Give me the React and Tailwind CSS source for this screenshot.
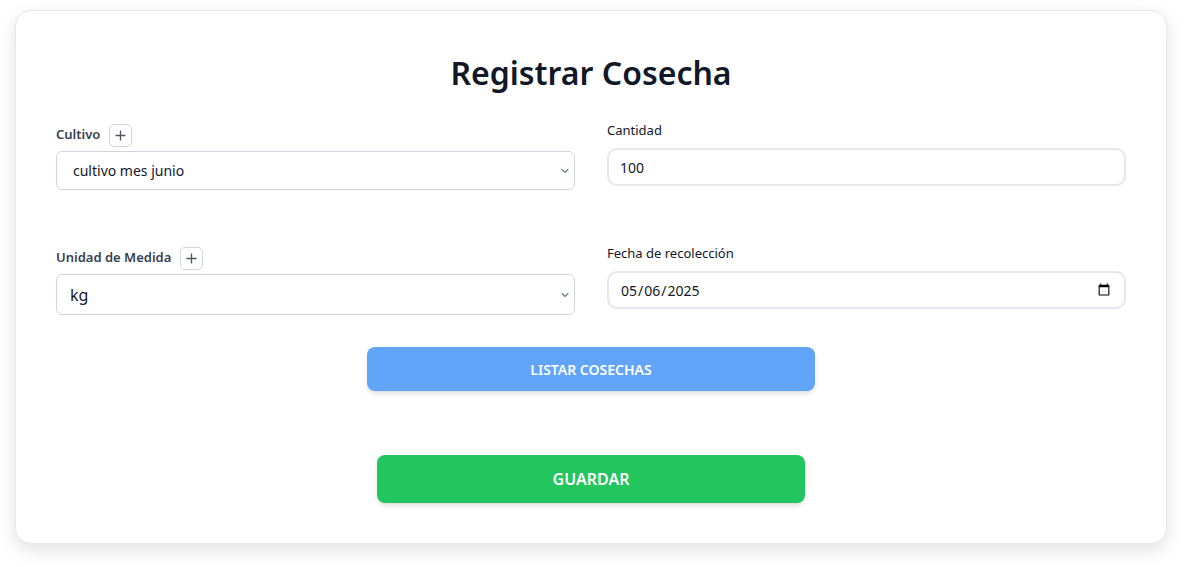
import { useState } from "react";

const font = { fontFamily: '"Noto Sans", "Open Sans", sans-serif' };

function PlusButton() {
  return (
    <button
      type="button"
      className="ml-[9px] w-[23px] h-[23px] flex items-center justify-center border border-gray-300 rounded-[5px] bg-white"
    >
      <svg width="11" height="11" viewBox="0 0 11 11">
        <path d="M5.5 0.5v10M0.5 5.5h10" stroke="#4b5563" strokeWidth="1.3" />
      </svg>
    </button>
  );
}

function Chevron() {
  return (
    <svg
      className="absolute right-[6px] top-1/2 -translate-y-1/2 pointer-events-none"
      width="8"
      height="5"
      viewBox="0 0 8 5"
    >
      <path d="M0.7 0.8L4 4L7.3 0.8" fill="none" stroke="#6b7280" strokeWidth="1.2" />
    </svg>
  );
}

export default function App() {
  const [cultivo, setCultivo] = useState("1");
  const [cantidad, setCantidad] = useState("100");
  const [unidad, setUnidad] = useState("kg");
  const [fecha, setFecha] = useState("2025-05-06");

  return (
    <div className="min-h-[567px] bg-white pt-[10px] pl-[15px]" style={font}>
      <div className="w-[1152px] bg-white border border-gray-200 rounded-2xl shadow-[0_6px_18px_rgba(0,0,0,0.12)] px-10 pt-10 pb-10">
        <h1 className="mt-[2px] text-center text-[32px] leading-10 font-semibold text-[#111827]">
          Registrar Cosecha
        </h1>

        {/* Campos */}
        <div className="mt-[30px] grid grid-cols-2 gap-x-8 gap-y-14">
          <div>
            <div className="flex items-center h-6">
              <span className="text-[13px] font-semibold text-gray-700">Cultivo</span>
              <PlusButton />
            </div>
            <div className="relative mt-1">
              <select
                value={cultivo}
                onChange={(e) => setCultivo(e.target.value)}
                className="appearance-none w-full h-[39px] pl-4 pr-6 text-[14px] text-gray-900 bg-white border border-gray-300 rounded-md"
              >
                <option value="1">cultivo mes junio</option>
              </select>
              <Chevron />
            </div>
          </div>

          <div>
            <label className="block text-[13px] leading-[14px] text-gray-900">Cantidad</label>
            <input
              value={cantidad}
              onChange={(e) => setCantidad(e.target.value)}
              className="mt-[11px] w-full h-[38px] px-[11px] text-[14px] text-gray-900 border-2 border-gray-200 rounded-[10px] outline-none"
            />
          </div>

          <div>
            <div className="flex items-center h-6">
              <span className="text-[13px] font-semibold text-gray-700">Unidad de Medida</span>
              <PlusButton />
            </div>
            <div className="relative mt-1">
              <select
                value={unidad}
                onChange={(e) => setUnidad(e.target.value)}
                className="appearance-none w-full h-[41px] pl-[13px] pr-6 text-[16px] text-gray-900 bg-white border border-gray-300 rounded-md"
              >
                <option value="kg">kg</option>
              </select>
              <Chevron />
            </div>
          </div>

          <div>
            <label className="block text-[13px] leading-[14px] text-gray-900">Fecha de recolección</label>
            <input
              type="date"
              value={fecha}
              onChange={(e) => setFecha(e.target.value)}
              className="mt-[11px] w-full h-[38px] px-[11px] text-[14px] text-gray-900 border-2 border-gray-200 rounded-[10px] outline-none"
            />
          </div>
        </div>

        {/* Botones */}
        <div className="mt-8 flex justify-center">
          <button className="w-[448px] h-[44px] bg-[#60a5fa] text-white text-[14px] font-semibold uppercase rounded-lg shadow-md">
            Listar Cosechas
          </button>
        </div>

        <div className="mt-16 flex justify-center">
          <button className="w-[428px] h-12 bg-[#22c55e] text-white text-[16px] font-semibold uppercase rounded-lg shadow-md">
            Guardar
          </button>
        </div>
      </div>
    </div>
  );
}
